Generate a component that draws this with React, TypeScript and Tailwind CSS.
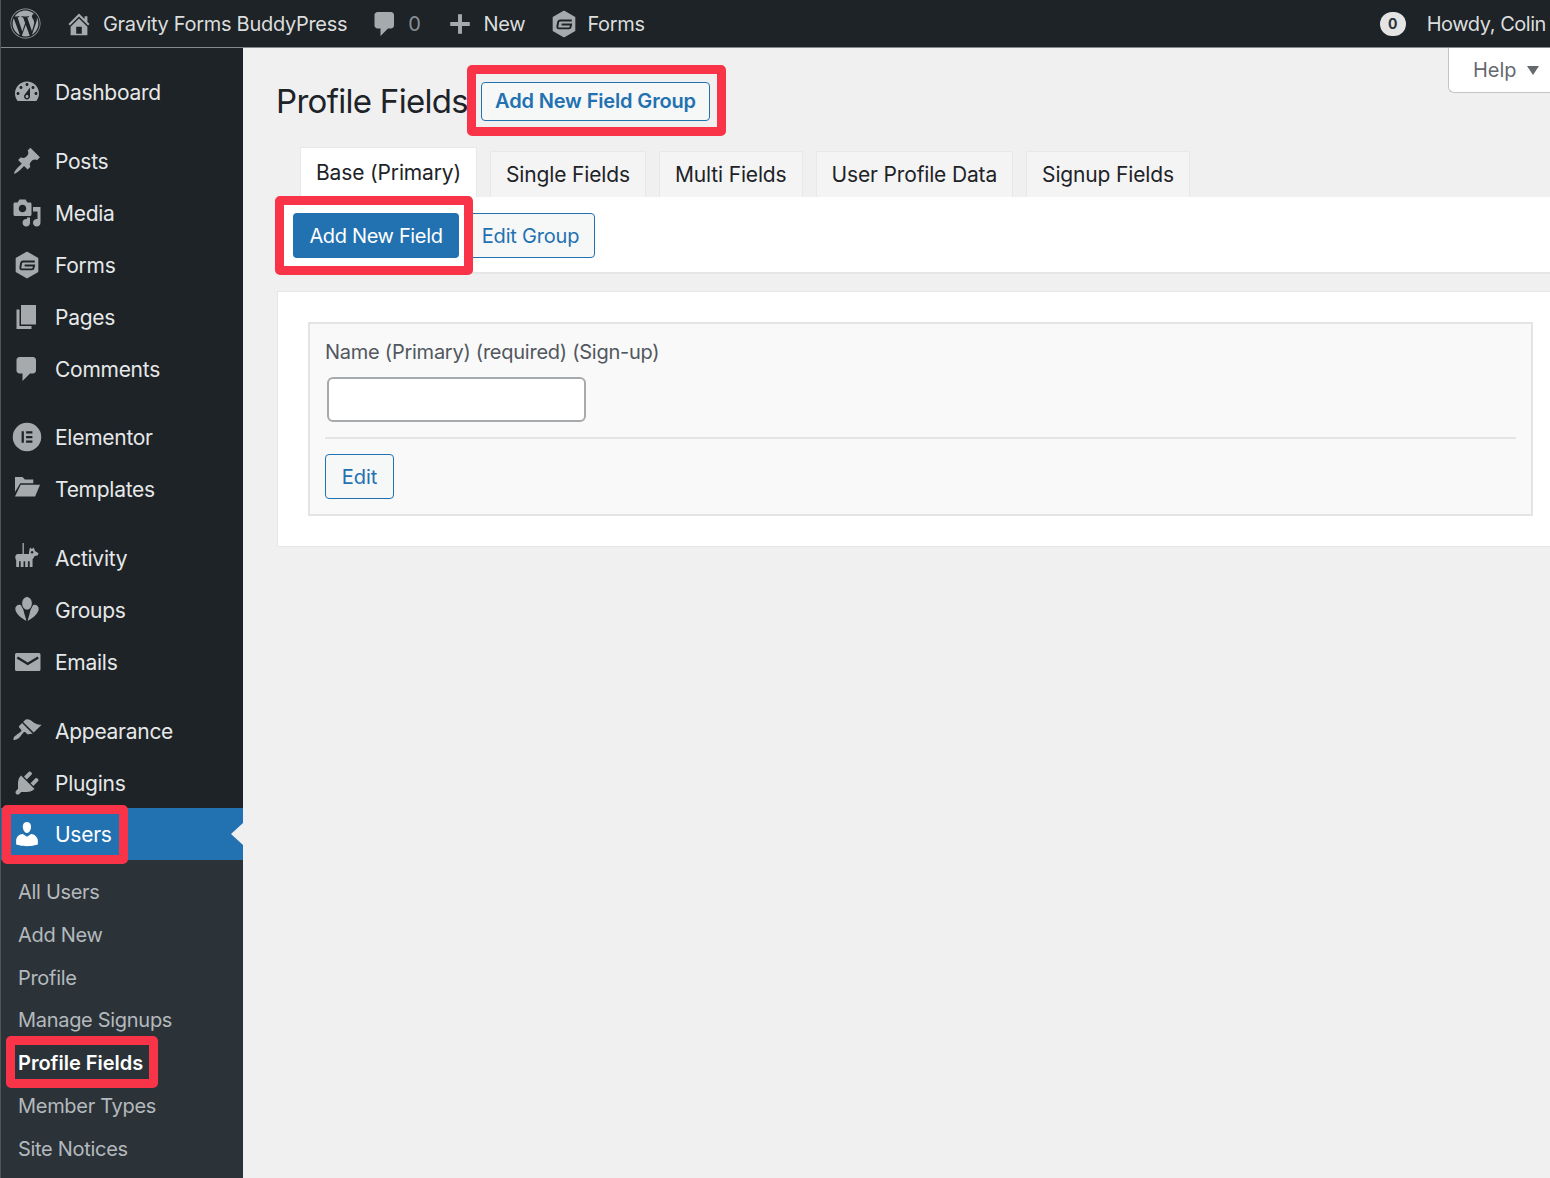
import { FaWordpress } from "react-icons/fa";
import type { ReactNode } from "react";

function Icon({ size = 30, className = "text-[#a7aaad]", children }: { size?: number; className?: string; children: ReactNode }) {
  return (
    <svg viewBox="0 0 20 20" width={size} height={size} fill="currentColor" className={className}>
      {children}
    </svg>
  );
}

// Gravity Forms hexagon, dark G knocked out of it
const GravityIcon = ({ size = 30 }: { size?: number }) => (
  <Icon size={size}>
    <path d="M10 1.7 17 5.6v8.8l-7 3.9-7-3.9V5.6z" stroke="currentColor" strokeWidth="1.1" strokeLinejoin="round" />
    <path d="M15.2 7.7H7.4c-.7 0-1.1.3-1.3 1l-.5 2.8c-.2.8.2 1.4 1 1.4h6.6c.7 0 1.1-.4 1.2-1l.3-1.6H8.4" fill="none" stroke="#1d2327" strokeWidth="1.3" />
  </Icon>
);

const icons: Record<string, ReactNode> = {
  Dashboard: (
    <Icon>
      <path d="M3.76 16h12.48c1.1-1.37 1.76-3.11 1.76-5 0-4.42-3.58-8-8-8s-8 3.58-8 8c0 1.89.66 3.63 1.76 5zM10 4c.55 0 1 .45 1 1s-.45 1-1 1-1-.45-1-1 .45-1 1-1zM6 6c.55 0 1 .45 1 1s-.45 1-1 1-1-.45-1-1 .45-1 1-1zm8 0c.55 0 1 .45 1 1s-.45 1-1 1-1-.45-1-1 .45-1 1-1zm-5.37 5.55L12 7v6c0 1.1-.9 2-2 2s-2-.9-2-2c0-.57.24-1.08.63-1.45zM4 10c.55 0 1 .45 1 1s-.45 1-1 1-1-.45-1-1 .45-1 1-1zm12 0c.55 0 1 .45 1 1s-.45 1-1 1-1-.45-1-1 .45-1 1-1zm-5 3c0-.55-.45-1-1-1s-1 .45-1 1 .45 1 1 1 1-.45 1-1z" fillRule="evenodd" />
    </Icon>
  ),
  Posts: (
    <Icon>
      <path d="M10.44 3.02l1.82-1.82 6.36 6.35-1.83 1.82c-1.05-.68-2.48-.57-3.41.36l-.75.75c-.92.93-1.04 2.35-.35 3.41l-1.83 1.82-2.41-2.41-2.8 2.79c-.42.42-3.38 2.71-3.8 2.29s1.86-3.39 2.28-3.81l2.79-2.79L4.1 9.36l1.83-1.82c1.05.69 2.48.57 3.41-.36l.75-.75c.93-.92 1.04-2.35.35-3.41z" />
    </Icon>
  ),
  Media: (
    <Icon>
      <path d="M13 11V4c0-.55-.45-1-1-1h-1.67L9 1H5L3.67 3H2c-.55 0-1 .45-1 1v7c0 .55.45 1 1 1h10c.55 0 1-.45 1-1zM7 4.5c1.38 0 2.5 1.12 2.5 2.5S8.38 9.5 7 9.5 4.5 8.38 4.5 7 5.62 4.5 7 4.5zM14 6h5v10.5c0 1.38-1.12 2.5-2.5 2.5S14 17.88 14 16.5s1.12-2.5 2.5-2.5c.17 0 .34.02.5.05V9h-3V6zm-4 8.05V13h2v3.5c0 1.38-1.12 2.5-2.5 2.5S7 17.88 7 16.5 8.12 14 9.5 14c.17 0 .34.02.5.05z" />
    </Icon>
  ),
  Forms: <GravityIcon />,
  Pages: (
    <Icon>
      <path d="M6 15V2h10v13H6zm-1 1h8v2H3V5h2v11z" />
    </Icon>
  ),
  Comments: (
    <Icon>
      <path d="M5 2h9c1.1 0 2 .9 2 2v7c0 1.1-.9 2-2 2h-2l-5 5v-5H5c-1.1 0-2-.9-2-2V4c0-1.1.9-2 2-2z" />
    </Icon>
  ),
  Elementor: (
    <Icon>
      <path fillRule="evenodd" d="M10 .5a9.5 9.5 0 1 0 0 19 9.5 9.5 0 0 0 0-19zM6.4 6.2h1.5v7.6H6.4zM9.4 6.2h4.2v1.5H9.4zM9.4 9.25h4.2v1.5H9.4zM9.4 12.3h4.2v1.5H9.4z" />
    </Icon>
  ),
  Templates: (
    <Icon>
      <path d="M2 2h5l1.6 1.7h5.6v2.5H5.5L2 12z" />
      <path d="M5.8 7.2h12.9L15.4 15H2z" />
    </Icon>
  ),
  Activity: (
    <Icon>
      <g transform="translate(.7 0)">
        <path d="M6.3 0h.9v7.3h3.4c.1-1.4.2-3 .8-4.3l1.2 1 1.2-1c.4.8.6 1.5.8 2.4l2.4 1.4-.6 1.6-2 .3c-.3.9-.8 1.6-1.4 2.1V16h-1.9v-3.8h-1.2V16H8.1v-3.8H7V16H5.1v-3.8H4V16H2.1v-4.6c-.4-.4-.6-1-.6-1.6v-.6c0-1 .8-1.9 1.8-1.9h3z" />
        <circle cx="12.7" cy="6.2" r=".8" fill="#1d2327" />
      </g>
    </Icon>
  ),
  Groups: (
    <Icon>
      <g transform="translate(.7 0)">
        <path d="M9 17.3C6 15.6 1.6 12.6 1.5 9.3 1.4 7.2 3.4 6 5 6.6c1.6.7 2 3.8 2.6 6z" />
        <path d="M9.6 17.3c3-1.7 7.4-4.7 7.5-8 .1-2.1-1.9-3.3-3.5-2.7-1.6.7-2 3.8-2.6 6z" />
        <ellipse cx="9.3" cy="5.6" rx="3.6" ry="4.6" stroke="#1d2327" strokeWidth=".7" />
        <path d="M9.3 10v7.5" fill="none" stroke="#1d2327" strokeWidth=".7" />
      </g>
    </Icon>
  ),
  Emails: (
    <Icon>
      <path fillRule="evenodd" d="M3 4h15a1 1 0 0 1 1 1v10a1 1 0 0 1-1 1H3a1 1 0 0 1-1-1V5a1 1 0 0 1 1-1zm1 2.4-.9 1.2 7.4 4.6 7.4-4.6-.9-1.2-6.5 4z" />
    </Icon>
  ),
  Appearance: (
    <Icon>
      <path d="M14.48 11.06L7.41 3.99l1.5-1.5c.5-.56 2.3-.47 3.51.32 1.21.8 1.43 1.28 2.91 2.1 1.18.64 2.45 1.26 4.45.85zm-.71.71L6.7 4.7 4.93 6.47c-.39.39-.39 1.02 0 1.41l1.06 1.06c.39.39.39 1.03 0 1.42-.6.6-1.43 1.11-2.21 1.69-.35.26-.7.53-1.01.84C1.43 13.23.76 14.89 1 16c1.11.24 2.77-.43 4.12-1.77.31-.31.58-.66.84-1.01.58-.78 1.09-1.61 1.69-2.21.39-.39 1.03-.39 1.42 0l1.06 1.06c.39.39 1.02.39 1.41 0z" />
    </Icon>
  ),
  Plugins: (
    <Icon>
      <path d="M13.11 4.36L9.87 7.6 8 5.73l3.24-3.24c.35-.34 1.05-.2 1.56.32.52.51.66 1.21.31 1.55zm-8 1.77l.91-1.12 9.01 9.01-1.19.84c-.71.71-2.63 1.16-3.82 1.16H6.14L4.9 17.26c-.59.59-1.54.59-2.12 0-.59-.58-.59-1.53 0-2.12l1.24-1.24v-3.88c0-1.13.4-3.19 1.09-3.89zm7.26 3.97l3.24-3.24c.34-.35 1.04-.21 1.55.31.52.51.66 1.21.31 1.55l-3.24 3.25z" />
    </Icon>
  ),
  Users: (
    <Icon className="text-white">
      <path d="M10 9.25c-2.27 0-2.73-3.44-2.73-3.44C7 4.02 7.82 2 9.97 2c2.16 0 2.98 2.02 2.71 3.81 0 0-.41 3.44-2.68 3.44zm0 2.57L12.72 10c2.39 0 4.52 2.33 4.52 4.53v2.49s-3.65 1.13-7.24 1.13c-3.65 0-7.24-1.13-7.24-1.13v-2.49c0-2.25 1.94-4.48 4.47-4.48z" />
    </Icon>
  ),
};

function MenuItem({ label, active }: { label: string; active?: boolean }) {
  return (
    <div className={`flex items-center h-[52px] pl-[11px] relative ${active ? "bg-[#2271b1] text-white" : "text-[#e7e8e9]"}`}>
      <span className="w-[30px] h-[30px] mr-[13px] shrink-0">{icons[label]}</span>
      <span className="pt-[2px] text-[21px] tracking-[-0.27px]">{label}</span>
      {active && <span className="absolute right-0 top-[15px] border-y-[11px] border-r-[12px] border-y-transparent border-r-[#f0f0f1]" />}
    </div>
  );
}

function MenuGroup({ items, className = "" }: { items: string[]; className?: string }) {
  return (
    <div className={className}>
      {items.map((item) => (
        <MenuItem key={item} label={item} />
      ))}
    </div>
  );
}

const subItems = ["All Users", "Add New", "Profile", "Manage Signups", "Profile Fields", "Member Types", "Site Notices"];
const tabs = ["Single Fields", "Multi Fields", "User Profile Data", "Signup Fields"];

export default function App() {
  return (
    <div className="relative w-[1550px] h-[1178px] overflow-hidden bg-[#f0f0f1] [font-family:Inter,sans-serif] border-l border-[#50555a]">
      {/* admin bar */}
      <div className="flex items-center h-[48px] bg-[#1d2327] border-b border-[#85898c] text-[#dcdddd] text-[20px] tracking-[-0.3px]">
        <span className="ml-[9px] mr-[24px] text-[#a7aaad]">
          <FaWordpress size={31} />
        </span>
        <Icon size={28}>
          <path d="M16 8.5l1.53 1.53-1.06 1.06L10 4.62l-6.47 6.47-1.06-1.06L10 2.5l4 4v-2h2v4zm-6-2.46l6 5.99V18H4v-5.97zM12 17v-5H8v5h4z" />
        </Icon>
        <span className="ml-[10px]">Gravity Forms BuddyPress</span>
        <span className="ml-[23px]">
          <Icon size={30}>
            <path d="M5 2h9c1.1 0 2 .9 2 2v7c0 1.1-.9 2-2 2h-2l-5 5v-5H5c-1.1 0-2-.9-2-2V4c0-1.1.9-2 2-2z" />
          </Icon>
        </span>
        <span className="ml-[8px] text-[#8c8f94]">0</span>
        <span className="ml-[26px]">
          <Icon size={26}>
            <path d="M8.5 2.5h3v6h6v3h-6v6h-3v-6h-6v-3h6z" />
          </Icon>
        </span>
        <span className="ml-[11px]">New</span>
        <span className="ml-[24px]">
          <GravityIcon size={30} />
        </span>
        <span className="ml-[8px]">Forms</span>
        <span className="ml-auto flex items-center justify-center w-[26px] h-[24px] rounded-full bg-[#e4e4e4] text-[#2c3338] text-[14px] font-bold">0</span>
        <span className="ml-[21px] mr-[4px] whitespace-nowrap tracking-[-0.45px]">Howdy, Colin</span>
      </div>

      <div className="flex h-[1130px]">
        {/* sidebar */}
        <div className="w-[242px] shrink-0 bg-[#1d2327] flex flex-col">
          <MenuGroup items={["Dashboard"]} className="mt-[18px]" />
          <MenuGroup items={["Posts", "Media", "Forms", "Pages", "Comments"]} className="mt-[17px]" />
          <MenuGroup items={["Elementor", "Templates"]} className="mt-[16px]" />
          <MenuGroup items={["Activity", "Groups", "Emails"]} className="mt-[17px]" />
          <MenuGroup items={["Appearance", "Plugins"]} className="mt-[17px]" />
          <div className="-mt-px">
            <MenuItem label="Users" active />
          </div>
          <div className="flex-1 bg-[#2c3338] pt-[10.7px]">
            {subItems.map((item) => (
              <div
                key={item}
                className={`flex items-center h-[42.8px] pl-[17px] text-[20px] ${item === "Profile Fields" ? "text-white font-semibold" : "text-[#b4b9be] tracking-[-0.3px]"}`}
              >
                {item}
              </div>
            ))}
          </div>
        </div>

        {/* main */}
        <div className="flex-1 min-w-0 pl-[34px]">
          <div className="flex items-start justify-between h-[99px]">
            <div className="flex items-center mt-[33px] -ml-px">
              <h1 className="w-[191px] text-[33px] leading-[40px] text-[#1d2327] tracking-[-0.7px] whitespace-nowrap">Profile Fields</h1>
              <button className="ml-[14px] w-[229px] h-[39px] rounded-[4px] border border-[#2271b1] bg-[#f6f7f7] text-[#2271b1] text-[20px] font-semibold tracking-[-0.15px]">
                Add New Field Group
              </button>
            </div>
            <div className="flex items-center gap-[10px] w-[102px] h-[45px] pl-[24px] bg-white border border-t-0 border-r-0 border-[#c3c4c7] rounded-bl-[6px] text-[#646970] text-[20px]">
              Help
              <span className="border-x-[6px] border-t-[9px] border-x-transparent border-t-[#646970]" />
            </div>
          </div>

          <div className="flex items-end gap-[13px] pl-[23px] h-[50px]">
            <div className="flex items-center justify-center w-[177px] h-[50px] bg-white border border-b-0 border-[#e8e8e8] text-[#1d2327] text-[21px] tracking-[-0.15px]">
              Base (Primary)
            </div>
            {tabs.map((tab) => (
              <div key={tab} className="flex items-center px-[15px] h-[46px] bg-[#f4f4f4] border border-b-0 border-[#e8e8e8] text-[#1d2327] text-[21px] tracking-[-0.15px]">
                {tab}
              </div>
            ))}
          </div>

          <div className="flex items-center gap-[7px] h-[77px] pl-[16px] pt-[2px] bg-white border-b-2 border-[#e6e6e6]">
            <button className="w-[166px] h-[45px] rounded-[4px] bg-[#2271b1] text-white text-[20px] tracking-[-0.35px]">Add New Field</button>
            <button className="w-[129px] h-[45px] rounded-[4px] border border-[#2271b1] bg-[#f6f7f7] text-[#2271b1] text-[20px] tracking-[-0.2px]">Edit Group</button>
          </div>

          <div className="mt-[17px] pt-[30px] pb-[30px] pl-[30px] pr-[17px] bg-white border-t border-b border-l border-[#e6e6e6]">
            <div className="h-[194px] pt-[15px] px-[15px] bg-[#f9f9f9] border-2 border-[#e4e4e4]">
              <div className="text-[20px] leading-[26px] text-[#50575e] tracking-[-0.25px]">Name (Primary) (required) (Sign-up)</div>
              <div className="ml-[2px] mt-[12px] w-[259px] h-[45px] rounded-[6px] bg-white border-2 border-[#a7aaad]" />
              <div className="mt-[15px] border-t-2 border-[#e4e4e4]" />
              <button className="mt-[15px] w-[69px] h-[45px] rounded-[4px] border-[1.5px] border-[#2271b1] bg-[#f6f7f7] text-[#2271b1] text-[20px]">Edit</button>
            </div>
          </div>
        </div>
      </div>

      {/* red annotation boxes drawn over the screenshot */}
      <div className="absolute left-[466px] top-[65px] w-[259px] h-[71px] border-[9px] border-[#f93448] rounded-[5px] pointer-events-none" />
      <div className="absolute left-[274px] top-[196px] w-[198px] h-[79px] border-[9px] border-[#f93448] rounded-[5px] pointer-events-none" />
      <div className="absolute left-[1px] top-[805px] w-[126px] h-[59px] border-[9px] border-[#f93448] rounded-[5px] pointer-events-none" />
      <div className="absolute left-[5px] top-[1036px] w-[152px] h-[52px] border-[9px] border-[#f93448] rounded-[5px] pointer-events-none" />
    </div>
  );
}
